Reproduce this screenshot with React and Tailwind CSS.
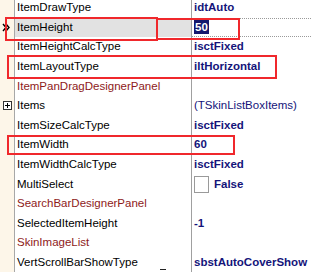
const rows = [
  { name: "ItemDrawType", value: "idtAuto" },
  { name: "ItemHeight", value: "50", selected: true },
  { name: "ItemHeightCalcType", value: "isctFixed" },
  { name: "ItemLayoutType", value: "iltHorizontal" },
  { name: "ItemPanDragDesignerPanel", red: true },
  { name: "Items", value: "(TSkinListBoxItems)", plain: true, expand: true },
  { name: "ItemSizeCalcType", value: "isctFixed" },
  { name: "ItemWidth", value: "60" },
  { name: "ItemWidthCalcType", value: "isctFixed" },
  { name: "MultiSelect", value: "False", check: true },
  { name: "SearchBarDesignerPanel", red: true },
  { name: "SelectedItemHeight", value: "-1" },
  { name: "SkinImageList", red: true },
  { name: "VertScrollBarShowType", value: "sbstAutoCoverShow" },
];

function Row({ row }) {
  return (
    <div className="flex h-[19.6px]">
      <div className="w-[14px] shrink-0 bg-[#fdf6e9] flex items-center justify-center">
        {row.selected && (
          <svg width="8" height="9" viewBox="0 0 8 9" className="-ml-[2px]">
            <path d="M1 1 L4 4.5 L1 8 M4 1 L7 4.5 L4 8" stroke="#000" strokeWidth="1.4" fill="none" />
          </svg>
        )}
        {row.expand && (
          <div className="w-[9px] h-[9px] border border-[#333] bg-white flex items-center justify-center ml-[1px]">
            <svg width="5" height="5" viewBox="0 0 5 5">
              <path d="M0 2.5 H5 M2.5 0 V5" stroke="#000" strokeWidth="1" />
            </svg>
          </div>
        )}
      </div>
      <div className="w-px shrink-0 bg-[#a8a8a8]" />
      <div
        className={
          "w-[176px] shrink-0 flex items-center pl-[2px] " +
          (row.selected ? "bg-[#e2e2e2] " : "") +
          (row.red ? "text-[#8e1a1a]" : "text-black")
        }
      >
        {row.name}
      </div>
      <div className="w-px shrink-0 bg-[#a0a0a0]" />
      <div
        className={
          "flex-1 flex items-center pl-[2px] text-[#14147a] " +
          (row.plain ? "font-normal " : "font-bold ") +
          (row.selected ? "border-y border-dotted border-[#9a9a9a]" : "")
        }
      >
        {row.selected && <span className="bg-[#14186e] text-white px-[1px] leading-[14px]">{row.value}</span>}
        {row.check && <div className="w-[15px] h-[17px] border border-[#9a9a9a] bg-white mr-[5px]" />}
        {!row.selected && row.value}
      </div>
    </div>
  );
}

export default function App() {
  return (
    <div className="relative w-[311px] h-[272px] overflow-hidden bg-white text-[11.5px] font-['Liberation_Sans',sans-serif]">
      <div className="-mt-[2px]">
        {rows.map((r) => (
          <Row key={r.name} row={r} />
        ))}
      </div>

      {/* red annotation boxes */}
      <div className="absolute left-[5px] top-[17px] w-[153px] h-[24px] border-2 border-[#f0282c]" />
      <div className="absolute left-[156px] top-[18px] w-[84px] h-[22px] border-2 border-[#f0282c]" />
      <div className="absolute left-[7px] top-[55px] w-[270px] h-[24px] border-2 border-[#f0282c]" />
      <div className="absolute left-[7px] top-[135px] w-[228px] h-[20px] border-2 border-[#f0282c]" />

      <div className="absolute left-[160px] top-[269px] w-[6px] h-px bg-[#222]" />
    </div>
  );
}
